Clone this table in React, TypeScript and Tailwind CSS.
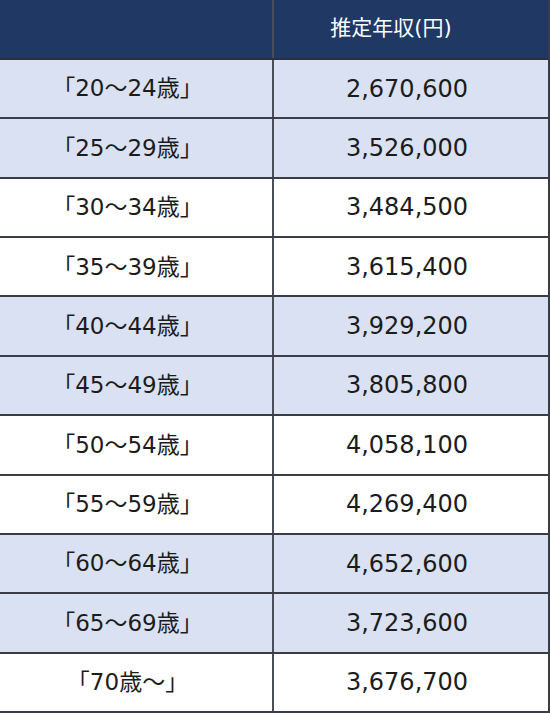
const rows: [string, string][] = [
  ["「20～24歳」", "2,670,600"],
  ["「25～29歳」", "3,526,000"],
  ["「30～34歳」", "3,484,500"],
  ["「35～39歳」", "3,615,400"],
  ["「40～44歳」", "3,929,200"],
  ["「45～49歳」", "3,805,800"],
  ["「50～54歳」", "4,058,100"],
  ["「55～59歳」", "4,269,400"],
  ["「60～64歳」", "4,652,600"],
  ["「65～69歳」", "3,723,600"],
  ["「70歳～」", "3,676,700"],
];

// rows are shaded in pairs: 2 blue, 2 white...
const shaded = (i: number) => Math.floor(i / 2) % 2 === 0;

export default function App() {
  return (
    <div
      className="w-[550px] h-[713px] flex flex-col bg-white border-r-2 border-b-2 border-[#3a3d45] text-[#1c1c1c]"
      style={{ fontFamily: '"DejaVu Sans", "Noto Sans CJK JP", sans-serif' }}
    >
      {/* header */}
      <div className="h-[60px] shrink-0 flex bg-[#1f3864] border-b-2 border-[#2c2f38]">
        <div className="w-[274px] border-r-2 border-[#4a4e5a]"></div>
        <div className="flex-1 flex items-center justify-center pr-[40px] text-[21px] text-white">
          推定年収(円)
        </div>
      </div>

      {rows.map(([age, val], i) => (
        <div
          key={i}
          className={
            "flex-1 flex " +
            (i < rows.length - 1 ? "border-b-2 border-[#3a3d45] " : "") +
            (shaded(i) ? "bg-[#d9e1f2]" : "bg-white")
          }
        >
          <div className="w-[274px] flex items-center justify-center pr-[17px] border-r-2 border-[#4a4e5a] text-[23px]">
            {age}
          </div>
          <div className="flex-1 flex items-center justify-center pr-2 text-[24px]">{val}</div>
        </div>
      ))}
    </div>
  );
}
